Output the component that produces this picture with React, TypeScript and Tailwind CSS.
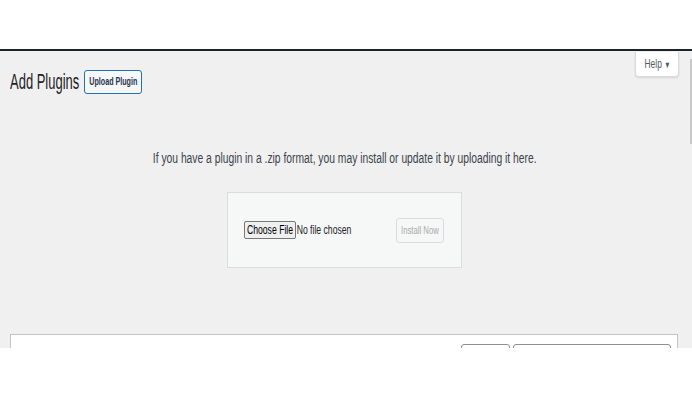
import React from "react";

const F = { fontFamily: '"Liberation Sans", Arial, sans-serif' };

export default function App() {
  return (
    <div className="w-[692px] h-[399px] bg-white flex flex-col overflow-hidden" style={F}>
      <div className="h-[49px] bg-white shrink-0" />
      <div className="h-[2px] bg-[#1d2327] shrink-0" />
      <div className="h-[297px] shrink-0 bg-[#f0f0f1] flex">
        <div className="flex-1 flex flex-col">
          <div className="flex items-start justify-between shrink-0">
            <div className="flex items-center pl-[10px] pt-[19px] gap-[5px]">
              <div className="w-[69px] h-[24px] flex items-center whitespace-nowrap">
                <span className="inline-block origin-left scale-x-[0.59] text-[22px] leading-none text-[#1d2327]">
                  Add Plugins
                </span>
              </div>
              <div className="w-[58px] h-[24px] border border-[#2271b1] rounded-[3px] bg-[#f6f7f7] flex items-center justify-center whitespace-nowrap">
                <span className="inline-block scale-x-[0.68] text-[10.5px] font-bold text-[#1d3550]">
                  Upload Plugin
                </span>
              </div>
            </div>
            <div className="mt-[1px] mr-[10px] w-[44px] h-[25px] bg-white border border-[#dcdcde] border-t-0 rounded-b-[4px] shadow-[0_1px_2px_rgba(0,0,0,0.12)] flex items-center justify-center whitespace-nowrap">
              <span className="inline-block scale-x-[0.7] text-[12px] text-[#50575e]">
                Help <span className="text-[9px]">▼</span>
              </span>
            </div>
          </div>
          <div className="mt-[56px] shrink-0 flex justify-center whitespace-nowrap">
            <span className="inline-block scale-x-[0.736] text-[14px] leading-[16px] text-[#3c434a]">
              If you have a plugin in a .zip format, you may install or update it by uploading it here.
            </span>
          </div>
          <div className="mt-[26px] shrink-0 ml-[227px] w-[235px] h-[76px] bg-[#f6f7f7] border border-[#dcdcde] flex items-center pl-[16px] pr-[17px]">
            <div className="w-[52px] h-[18px] bg-[#efefef] border border-[#767676] rounded-[2px] flex items-center justify-center whitespace-nowrap">
              <span className="inline-block scale-x-[0.72] text-[12px] text-black">Choose File</span>
            </div>
            <div className="ml-[2px] w-[52px] whitespace-nowrap flex justify-center">
              <span className="inline-block scale-x-[0.72] text-[12px] text-[#1d2327]">No file chosen</span>
            </div>
            <div className="ml-auto w-[48px] h-[25px] border border-[#dcdcde] rounded-[3px] bg-[#f6f7f7] flex items-center justify-center whitespace-nowrap">
              <span className="inline-block scale-x-[0.7] text-[11px] text-[#a7aaad]">Install Now</span>
            </div>
          </div>
          <div className="mt-[66px] ml-[10px] mr-[11px] flex-1 bg-white border border-[#c3c4c7] border-b-0 flex justify-end items-start pt-[9px] pr-[6px] gap-[3px]">
            <div className="w-[49px] h-[20px] shrink-0 border border-[#8c8f94] rounded-[3px] bg-white" />
            <div className="w-[158px] h-[20px] shrink-0 border border-[#8c8f94] rounded-[3px] bg-white" />
          </div>
        </div>
        <div className="w-[3px] flex flex-col pt-[8px]">
          <div className="w-[2px] ml-[1px] h-[85px] bg-[#c8c8c8]" />
        </div>
      </div>
      <div className="flex-1 bg-white" />
    </div>
  );
}
